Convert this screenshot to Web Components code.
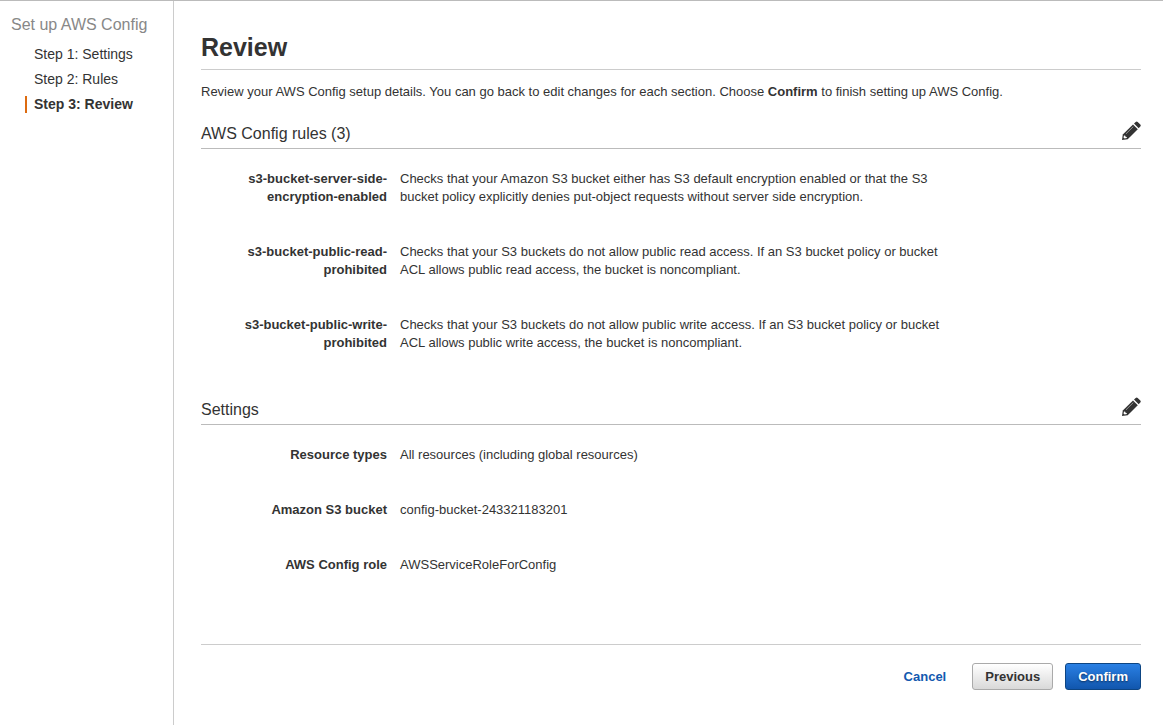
<!DOCTYPE html>
<html lang="en">
<head>
<meta charset="utf-8">
<meta name="viewport" content="width=device-width, initial-scale=1">
<title>AWS Config setup - Review</title>
<style>
  body { margin: 0; background: #fff; color: #333; font: 13px/18px "Liberation Sans", Arial, sans-serif; }
</style>
</head>
<body>
<setup-wizard>
  <wizard-nav slot="nav" heading="Set up AWS Config">
    <wizard-step>Step 1: Settings</wizard-step>
    <wizard-step>Step 2: Rules</wizard-step>
    <wizard-step current>Step 3: Review</wizard-step>
  </wizard-nav>
  <page-intro heading="Review">Review your AWS Config setup details. You can go back to edit changes for each section. Choose <b>Confirm</b> to finish setting up AWS Config.</page-intro>
  <review-section heading="AWS Config rules (3)">
    <review-row label="s3-bucket-server-side-encryption-enabled">Checks that your Amazon S3 bucket either has S3 default encryption enabled or that the S3 bucket policy explicitly denies put-object requests without server side encryption.</review-row>
    <review-row label="s3-bucket-public-read-prohibited">Checks that your S3 buckets do not allow public read access. If an S3 bucket policy or bucket ACL allows public read access, the bucket is noncompliant.</review-row>
    <review-row label="s3-bucket-public-write-prohibited">Checks that your S3 buckets do not allow public write access. If an S3 bucket policy or bucket ACL allows public write access, the bucket is noncompliant.</review-row>
  </review-section>
  <review-section heading="Settings">
    <review-row label="Resource types">All resources (including global resources)</review-row>
    <review-row label="Amazon S3 bucket">config-bucket-243321183201</review-row>
    <review-row label="AWS Config role">AWSServiceRoleForConfig</review-row>
  </review-section>
  <wizard-actions></wizard-actions>
</setup-wizard>

<script>
  const define = (name, render) => customElements.define(name, class extends HTMLElement {
    constructor() {
      super();
      this.attachShadow({ mode: 'open' });
    }
    connectedCallback() {
      const template = document.createElement('template');
      template.innerHTML = render(this);
      this.shadowRoot.replaceChildren(template.content.cloneNode(true));
    }
  });

  define('setup-wizard', () => `
    <style>
      :host { display: grid; grid-template-columns: 174px minmax(0, 1fr); min-height: 100vh; box-sizing: border-box; border-top: 1px solid #bbb; }
      aside { border-right: 1px solid #ccc; }
      main { padding: 32px 22px 32px 27px; }
    </style>
    <aside><slot name="nav"></slot></aside>
    <main><slot></slot></main>`);

  define('wizard-nav', el => `
    <style>
      :host { display: block; padding: 13px 8px 12px 11px; }
      h2 { margin: 0 0 10px; font-size: 16px; line-height: 22px; font-weight: 400; color: #888; white-space: nowrap; }
    </style>
    <nav aria-label="Setup steps"><h2>${el.getAttribute('heading')}</h2><slot></slot></nav>`);

  define('wizard-step', () => `
    <style>
      :host { display: block; margin: 0 0 8px 14px; padding-left: 7px; border-left: 2px solid transparent; font-size: 14px; line-height: 17px; }
      :host([current]) { border-color: #dd6b10; font-weight: 700; }
    </style>
    <slot></slot>`);

  define('page-intro', el => `
    <style>
      :host { display: block; }
      h1 { margin: 0 0 13px; padding-bottom: 8px; border-bottom: 1px solid #ccc; font-size: 25px; line-height: 28px; }
      p { margin: 0 0 12px; }
    </style>
    <h1>${el.getAttribute('heading')}</h1>
    <p><slot></slot></p>`);

  define('review-section', el => `
    <style>
      :host { display: block; }
      header { display: flex; justify-content: space-between; align-items: center; margin-bottom: 21px; border-bottom: 1px solid #bbb; }
      h2 { margin: 0; padding: 11px 0 4px; font-size: 16px; line-height: 20px; font-weight: 400; }
      button { display: block; margin: 0; padding: 0; border: 0; background: none; color: #333; cursor: pointer; }
      svg { display: block; }
    </style>
    <section>
      <header>
        <h2>${el.getAttribute('heading')}</h2>
        <button type="button" aria-label="Edit ${el.getAttribute('heading')}">
          <svg width="20" height="20" viewBox="0 0 20 20" fill="currentColor" aria-hidden="true">
            <path d="M1 19 1.8 13.4 12 3.4 16.8 8.2 6.7 18.2Z"/>
            <path d="M13 2.5 14.7.9Q15.7 0 16.7.9L19.3 3.5Q20.2 4.5 19.3 5.4L17.7 7.2Z"/>
            <path d="M5 12.8 12.3 5.6" fill="none" stroke="#aaa" stroke-width=".8"/>
            <path d="M3 14.4 4.3 14.7 4.5 15.7 5.7 15.9 5.9 17 3.6 17.5 2.5 16.4Z" fill="#fff"/>
          </svg>
        </button>
      </header>
      <slot></slot>
    </section>`);

  define('review-row', el => `
    <style>
      :host { display: block; margin-bottom: 37px; }
      dl { display: grid; grid-template-columns: 186px minmax(0, 540px); column-gap: 13px; margin: 0; }
      dt { font-weight: 700; text-align: right; }
      dd { margin: 0; }
    </style>
    <dl><dt>${el.getAttribute('label')}</dt><dd><slot></slot></dd></dl>`);

  define('wizard-actions', () => `
    <style>
      :host { display: flex; justify-content: flex-end; align-items: center; gap: 12px; margin-top: 70px; padding-top: 18px; border-top: 1px solid #ccc; }
      a { margin-right: 14px; color: #1259b0; font-weight: 700; text-decoration: none; }
      button { box-sizing: border-box; height: 27px; margin: 0; padding: 0 12px; border: 1px solid #aaa; border-radius: 3px; background: linear-gradient(#fff, #d9d9d9); color: #333; font: inherit; font-weight: 700; line-height: 18px; cursor: pointer; }
      .primary { border-color: #0d4583; background: linear-gradient(#2a80e4, #1156ad); color: #fff; text-shadow: 0 1px 2px #0008; }
    </style>
    <a href="#cancel">Cancel</a>
    <button type="button">Previous</button>
    <button type="button" class="primary">Confirm</button>`);
</script>
</body>
</html>
